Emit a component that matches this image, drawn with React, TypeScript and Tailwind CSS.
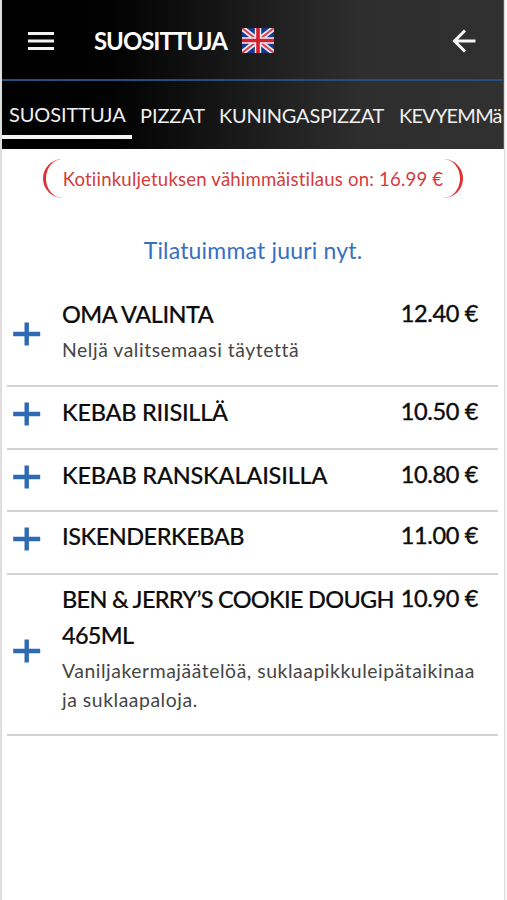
import React from "react";

type Item = {
  name: string[];
  price: string;
  description?: string[];
  height: string;
  textTop: string;
  plusShift: string;
  spacing: string;
};

const items: Item[] = [
  { name: ["OMA VALINTA"], price: "12.40 €", description: ["Neljä valitsemaasi täytettä"], height: "h-[92px]", textTop: "pt-[1px]", plusShift: "pb-[13px]", spacing: "tracking-[-0.5px]" },
  { name: ["KEBAB RIISILLÄ"], price: "10.50 €", height: "h-[63px]", textTop: "pt-[7px]", plusShift: "pb-[7px]", spacing: "tracking-[-0.25px]" },
  { name: ["KEBAB RANSKALAISILLA"], price: "10.80 €", height: "h-[62px]", textTop: "pt-[7px]", plusShift: "pb-[7px]", spacing: "tracking-[-0.2px]" },
  { name: ["ISKENDERKEBAB"], price: "11.00 €", height: "h-[63px]", textTop: "pt-[6px]", plusShift: "pb-[7px]", spacing: "tracking-[-0.5px]" },
  {
    name: ["BEN & JERRY’S COOKIE DOUGH", "465ML"],
    price: "10.90 €",
    description: ["Vaniljakermajäätelöä, suklaapikkuleipätaikinaa", "ja suklaapaloja."],
    height: "h-[161px]",
    textTop: "pt-[6px]",
    plusShift: "pb-[7px]",
    spacing: "tracking-[-0.7px]",
  },
];

function Flag() {
  return (
    <svg className="ml-[15px] h-[25px] w-[32px] shrink-0" viewBox="0 0 32 25" preserveAspectRatio="none">
      <rect width="32" height="25" fill="#16398f" />
      <path d="M0 0L32 25M32 0L0 25" stroke="#e8e9f2" strokeWidth="5.5" />
      <path d="M0 0L32 25M32 0L0 25" stroke="#d8434d" strokeWidth="2" />
      <path d="M16 0V25M0 12.5H32" stroke="#f4eef2" strokeWidth="6.4" />
      <path d="M16 0V25M0 12.5H32" stroke="#d51f2e" strokeWidth="3.6" />
    </svg>
  );
}

function Plus() {
  return (
    <svg className="h-[24px] w-[28px]" viewBox="0 0 28 24">
      <path d="M13.7 .5V23.5M.2 12H27.2" stroke="#2e6ab1" strokeWidth="4.4" />
    </svg>
  );
}

function Row({ item }: { item: Item }) {
  return (
    <li className={`flex border-b-2 border-[#d3d3d3] ${item.height}`}>
      <div className={`flex w-[55px] shrink-0 items-center pl-[6px] ${item.plusShift}`}>
        <Plus />
      </div>
      <div className={`min-w-0 flex-1 ${item.textTop}`}>
        <div className="flex justify-between pr-[20px]">
          <h2 className={`text-[23.5px] leading-[36px] font-medium whitespace-nowrap text-[#0c0c0c] [-webkit-text-stroke:0.15px_#0c0c0c] ${item.spacing}`}>
            {item.name.map((line) => <span className="block" key={line}>{line}</span>)}
          </h2>
          <span className="text-[23.5px] leading-[34px] tracking-[-0.35px] whitespace-nowrap text-[#0c0c0c] [-webkit-text-stroke:0.4px_#0c0c0c]">{item.price}</span>
        </div>
        {item.description && (
          <p className="pt-[3px] text-[19.4px] leading-[29px] tracking-[0.54px] whitespace-nowrap text-[#454545]">
            {item.description.map((line) => <span className="block" key={line}>{line}</span>)}
          </p>
        )}
      </div>
    </li>
  );
}

export default function App() {
  return (
    <div className="h-[900px] w-[507px] overflow-hidden bg-[#f7f7f7] font-['Lato','Liberation_Sans',sans-serif]">
      <div className="h-full w-[505px] border-r border-l-2 border-[#dedede] bg-white">
        <header className="h-[149px] border-r border-[#2d5f91] bg-[linear-gradient(90deg,#000_0%,#020202_22%,#1c1c1c_50%,#2e2e2e_72%,#303030_100%)] text-white">
          <div className="flex h-[81px] items-center border-b-2 border-[#244f79] pt-[2px] pr-[27px] pl-[26px]">
            <svg className="h-[20px] w-[26px]" viewBox="0 0 26 20">
              <path d="M0 2.5H26M0 10H26M0 17.5H26" stroke="#f2f2f2" strokeWidth="3" />
            </svg>
            <h1 className="ml-[40px] text-[24px] leading-[36px] font-bold tracking-[-1.05px] whitespace-nowrap">SUOSITTUJA</h1>
            <Flag />
            <svg className="ml-auto h-[24px] w-[24px]" viewBox="0 0 24 24" fill="none" stroke="#f5f5f5" strokeWidth="3">
              <path d="M23.5 12H3M13 1.5L2.5 12L13 22.5" />
            </svg>
          </div>
          <nav className="flex h-[68px] text-[20px] leading-[30px] tracking-[-0.1px] whitespace-nowrap text-[#f0f0f0]">
            <div className="h-[58px] w-[130px] shrink-0 border-b-4 border-[#f4f4f4] pt-[18px] pl-[7px]">SUOSITTUJA</div>
            <span className="w-[79px] shrink-0 pt-[19px] pl-[8px]">PIZZAT</span>
            <span className="w-[180px] shrink-0 pt-[19px] pl-[8px] tracking-[-0.25px]">KUNINGASPIZZAT</span>
            <span className="pt-[19px] pl-[8px] tracking-[-0.8px]">KEVYEMMä</span>
          </nav>
        </header>
        <main>
          <div className="ml-[41px] mt-[10px] flex h-[39px] w-[420px] items-center justify-center rounded-[26px] border-x-[3px] border-[#e03033] pt-[3px] text-[18.6px] tracking-[0.18px] whitespace-nowrap text-[#d33b3c]">
            Kotiinkuljetuksen vähimmäistilaus on: 16.99 €
          </div>
          <p className="mt-[34px] text-center text-[23px] leading-[36px] tracking-[0.18px] text-[#386fc2]">Tilatuimmat juuri nyt.</p>
          <ul className="mr-[6px] ml-[5px] mt-[27px]">
            {items.map((item) => <Row item={item} key={item.name[0]} />)}
          </ul>
        </main>
      </div>
    </div>
  );
}
